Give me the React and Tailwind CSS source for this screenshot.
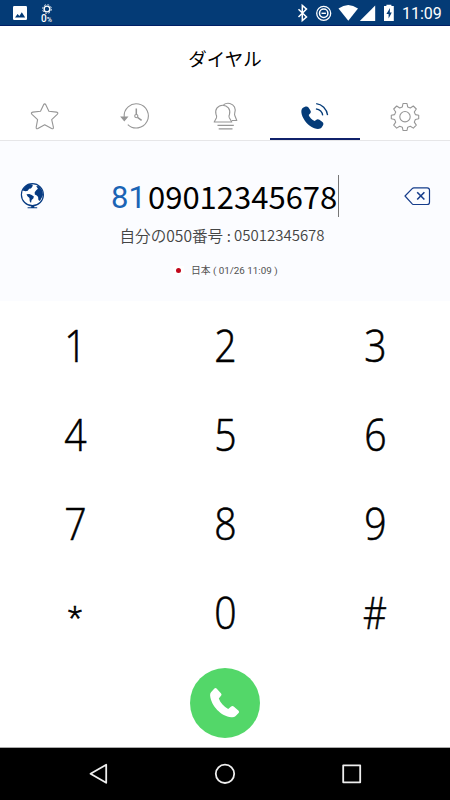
import React from 'react';

const KEYS = ['1', '2', '3', '4', '5', '6', '7', '8', '9', '*', '0', '#'];

const KEY_STYLES = {
  '*': 'pt-[8px] text-[29px] [-webkit-text-stroke:0.7px_black]',
  '#': 'scale-x-85 [-webkit-text-stroke:0.6px_black]'
};

function StatusBar() {
  return (
    <div className="flex h-[26px] items-start justify-between border-b border-[#001f66] bg-[#043b76] text-white">
      <div className="flex pl-[13px]">
        <svg className="mt-[5px] h-[16px] w-[14px]" viewBox="0 0 14 16">
          <rect y="1" width="14" height="14" rx="1.2" fill="currentColor" />
          <path d="M2 12.5l2.6-3.5 1.8 1.9 2.4-3.6 3.4 5.2z" fill="#043b76" />
        </svg>
        <div className="ml-[13px] flex w-[13px] flex-col items-center">
          <svg className="mt-[3.5px] h-[10px] w-[10px]" viewBox="0 0 10 10" fill="none" stroke="currentColor">
            <circle cx="5" cy="5" r="4.4" strokeWidth="1" strokeDasharray="1.9 1.55" opacity="0.8" />
            <circle cx="5" cy="5" r="2.9" strokeWidth="1.4" />
          </svg>
          <p className="font-['Roboto',sans-serif] text-[10px] leading-[10px] font-medium whitespace-nowrap">
            0<span className="text-[7px]">%</span>
          </p>
        </div>
      </div>
      <div className="flex pr-[9px]">
        <svg className="h-[26px] w-[100px]" viewBox="296 0 100 26">
          <path d="M298.5 9.2l8 7.8-4.2 3.6V5.4l4.2 3.7-8 7.9" fill="none" stroke="currentColor" strokeWidth="1.5" />
          <circle cx="323.7" cy="13.3" r="7" fill="none" stroke="currentColor" strokeWidth="1.3" />
          <circle cx="323.7" cy="13.3" r="4.2" fill="none" stroke="currentColor" strokeWidth="1.5" />
          <path d="M321.5 13.3h4.4" stroke="currentColor" strokeWidth="1.4" />
          <path d="M338.5 8.4q9.8-7 19.5 0L348.3 20.8z" fill="currentColor" />
          <path d="M375.2 5.5V21h-15.4z" fill="currentColor" />
          <path d="M384 6h2.4V4.7h5V6h2.4v15H384z" fill="currentColor" />
          <path d="M390 8l-3.6 6h2.2v4.5l3.2-6h-2z" fill="#043b76" />
        </svg>
        <p className="ml-[6px] w-[39px] font-['Roboto',sans-serif] text-[16px] leading-[28px] whitespace-nowrap">11:09</p>
      </div>
    </div>
  );
}

function Tabs() {
  return (
    <div className="grid h-[50px] grid-cols-5 border-b border-[#e6e6e8] text-[#969696]">
      <svg className="h-[49px] w-full" viewBox="0 91 90 49" fill="none" stroke="currentColor" strokeWidth="1.1" strokeLinejoin="round">
        <path d="M43.5 104.9q1.2-2 2.4 0l3 6.4 7.6.8q2.3.5.7 2.3l-5.5 5.2 1.7 7.6q.2 2.1-1.8 1.3l-6.9-3.8-6.8 3.8q-2 .8-1.700-1.300l1.400-7.600-5.600-5.200q-1.600-1.800.8-2.300l7.700-.8z" />
      </svg>
      <svg className="h-[49px] w-full" viewBox="90 91 90 49" fill="none" stroke="currentColor" strokeWidth="1.1">
        <path d="M124.2 117A12.1 12.1 0 1 1 127.8 124.6" />
        <path d="M121.3 117h6l-3 3.6z" fill="currentColor" />
        <path d="M136.3 108.5v6M137.5 117.3l4.1 3" strokeWidth="1.5" />
        <circle cx="136.3" cy="116.1" r="1.6" />
      </svg>
      <svg className="h-[49px] w-full" viewBox="180 91 90 49" fill="none" stroke="currentColor" strokeWidth="1.1" strokeLinejoin="round">
        <path d="M214.2 122l2.3-4.3q.5-1.6-.5-3.3c-1.4-5 2-9.2 6.7-9.2s8.2 4.2 6.8 9.2q-1 1.7-.2 3.3l2.5 4.3z" />
        <path d="M223.5 104.7c4-2.7 9.3-1.3 11 2.4 1.2 2.5.8 4.7.2 6.2q-.4 1.3.2 2.4l1.9 4.8h-5" />
        <path d="M217.5 125.4h16.3M218.7 128.9h13.8" />
      </svg>
      <div className="border-b-2 border-[#10216b] text-[#043b78]">
        <svg className="h-[47px] w-full" viewBox="270 91 90 47" fill="none" stroke="currentColor">
          <path d="M303 107.8l2-1c1.4-.6 2.6-.3 3.5.8l1.9 2.9c.8 1.3.5 2.4-.5 3.3l-1.2 1.1c.7 2.3 3.4 5 6 6l1.3-1c1.2-.9 2.3-.9 3.4-.1l3 2.2c1.2 1 1.3 2.2.5 3.5l-1.1 1.8c-1.2 1.9-4.4 2.2-7.5.9-5.8-2.2-11-8.1-12.6-14-.8-3-.3-5.6 1.3-6.4z" fill="currentColor" stroke="none" />
          <path d="M316.2 103.6c5.6.6 10.6 5.2 11.4 11.6M315.9 108.8c3.8.5 6.4 3 6.8 6.6" strokeWidth="1.3" />
        </svg>
      </div>
      <svg className="h-[49px] w-full" viewBox="360 91 90 49" fill="none" stroke="currentColor" strokeWidth="1.1" strokeLinejoin="round">
        <circle cx="405" cy="116.7" r="5.2" />
        <path d="M403 103.5h4l.7 3.4 2.6 1.1 3-2 3 3-2 3 1.1 2.6 3.3.7v3.4l-3.3.8-1.1 2.6 2 3-3 3-3-1.9-2.6 1-.7 3.3h-4l-.7-3.3-2.6-1-3 1.9-3-3 2-3-1.1-2.6-3.3-.8v-3.4l3.3-.7 1.1-2.6-2-3 3-3 3 2 2.6-1.1z" />
      </svg>
    </div>
  );
}

function NumberPanel() {
  return (
    <div className="flex h-[160px] flex-col bg-[#fbfcff] font-['Noto_Sans_CJK_JP',sans-serif]">
      <div className="flex h-[80px] items-center pt-[30px]">
        <svg className="ml-[20px] h-[28px] w-[25px] text-[#073b82]" viewBox="20 182 25 28">
          <circle cx="32.4" cy="194.7" r="11" fill="#fff" stroke="currentColor" strokeWidth="1.2" />
          <path d="M22.5 190.5q2.3-5.2 7.2-6.5l3.2.7-.6 2-1.4 1.7-1.8.3-1.3 2-2.2.6-2.1-.6z" fill="currentColor" />
          <path d="M26.5 194.3l2.8-.4 2.4 1.2 2.2 1.3-.6 2-1.7 1.7-.6 3-1.3-1.8-.2-3.4-2-1.6z" fill="currentColor" />
          <path d="M36.2 186.1l3 .2 3.3 4.7.5 4-1.7 3.4-1.4 2.6-1.5-1-.3-2.9-1.3-1.6-2-1-.1-2.2 1.5-2.1 1.7-1.4z" fill="currentColor" />
          <path d="M31.2 206h3v1.2h3v1.1h-9.6v-1.1h3.6z" fill="currentColor" />
        </svg>
        <div className="ml-[66px] flex h-[42px] w-[228px] items-center border-r border-[#777] whitespace-nowrap">
          <span className="w-[37px] pt-[3px] font-['Roboto',sans-serif] text-[31px] leading-[42px] text-[#1b64b5]">81</span>
          <span className="text-[31px] leading-[42px] text-black">09012345678</span>
        </div>
        <svg className="ml-[65px] h-[20px] w-[27px] text-[#153c8b]" viewBox="404 186 27 20" fill="none" stroke="currentColor" strokeLinejoin="round">
          <path d="M405 196l7.2-7.4q.7-.7 1.7-.7h13.3q2.3 0 2.3 2.3v12q0 2.3-2.3 2.3h-13.3q-1 0-1.7-.7z" strokeWidth="1.2" />
          <path d="M417.2 192.3l7.2 7.2M424.4 192.3l-7.2 7.2" strokeWidth="1.6" />
        </svg>
      </div>
      <p className="ml-[119.5px] flex h-[28px] items-center text-[15.6px] leading-[28px] whitespace-pre text-[#444]">
        <span className="w-[114.5px] font-[350]">自分の050番号 :</span>
        <span className="text-[15px] font-[350]">05012345678</span>
      </p>
      <div className="mt-[11px] ml-[173px] flex h-[20px] items-center">
        <span className="flex h-[8px] w-[11px] items-center justify-center bg-white">
          <span className="size-[5px] rounded-full bg-[#c1071b]" />
        </span>
        <span className="ml-[7px] pt-px font-['Roboto','Noto_Sans_CJK_JP',sans-serif] text-[9.8px] leading-[20px] whitespace-nowrap text-[#505050]">日本 ( 01/26 11:09 )</span>
      </div>
    </div>
  );
}

function Keypad() {
  return (
    <div className="grid h-[358px] grid-cols-3 grid-rows-[repeat(4,89px)] font-['Open_Sans',sans-serif] text-[43.5px] font-light text-black">
      {KEYS.map(key => (
        <button key={key} className="flex items-center justify-center leading-[89px]">
          <span className={KEY_STYLES[key] || 'scale-x-90 [-webkit-text-stroke:0.6px_black]'}>{key}</span>
        </button>
      ))}
    </div>
  );
}

function NavBar() {
  return (
    <div className="flex h-[53px] border-t border-[#aaa] bg-black">
      <svg className="h-[52px] w-full" viewBox="0 748 450 52" fill="none" stroke="#eee" strokeWidth="1.8" strokeLinejoin="round">
        <path d="M90.5 773.8l15.7-9v18z" />
        <circle cx="225" cy="773.8" r="9.2" />
        <rect x="343.2" y="765.3" width="17" height="17" />
      </svg>
    </div>
  );
}

export default function App() {
  return (
    <div className="flex h-[800px] w-[450px] flex-col overflow-hidden bg-white">
      <StatusBar />
      <header className="flex h-[65px] items-center justify-center font-['Noto_Sans_CJK_JP',sans-serif] text-[18.5px] text-black">
        ダイヤル
      </header>
      <Tabs />
      <NumberPanel />
      <Keypad />
      <div className="flex h-[88px] justify-center pt-[9px]">
        <button className="flex size-[70px] items-center justify-center rounded-full bg-[#53d769] text-white">
          <svg className="size-[70px]" viewBox="190 668 70 70" fill="currentColor">
            <path d="M211 692.2l3.4-3.6q1.2-1.1 2.4.1l4.3 4.7q1 1.2-.1 2.4l-2.2 2.6c1.6 4.4 5.2 8.4 9.4 10.5l2.6-2.2q1.9-1.3 3.2.1l4.6 4q1.1 1.2 0 2.3l-3.2 3.1q-1.4 1.4-4 1.1c-10.5-1.2-20.2-11.5-21.3-21.9q-.2-2 .9-3.2z" />
          </svg>
        </button>
      </div>
      <NavBar />
    </div>
  );
}
